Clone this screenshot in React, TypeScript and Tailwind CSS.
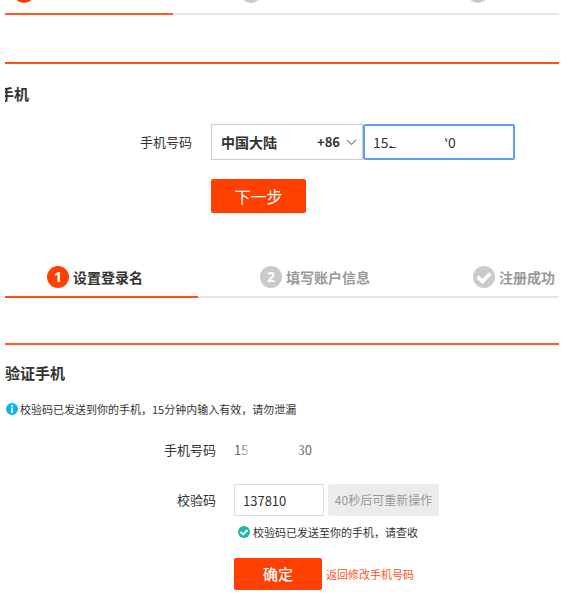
import { useState } from 'react';

function CheckMark({ className }: { className: string }) {
  return (
    <svg viewBox="0 0 22 22" className={className} aria-hidden="true">
      <circle cx="11" cy="11" r="11" fill="currentColor" />
      <path d="M4.6 10.8l4.8 4.6 8-8" fill="none" stroke="#fff" strokeWidth="3.6" />
    </svg>
  );
}

function InfoIcon() {
  return (
    <svg viewBox="0 0 12 12" className="size-3 text-[#0ab4f5]" aria-hidden="true">
      <circle cx="6" cy="6" r="6" fill="currentColor" />
      <path d="M5 2.2h2v1.6H5zM5 4.8h2v5H5z" fill="#fff" />
    </svg>
  );
}

function Badge({ active, children }: { active?: boolean; children?: string }) {
  return (
    <span
      className={`flex size-[22px] shrink-0 items-center justify-center rounded-full font-['Open_Sans',sans-serif] text-sm font-bold text-white ${
        active ? 'bg-[#ff4000]' : 'bg-[#cacaca]'
      }`}
    >
      {children}
    </span>
  );
}

function PhoneForm() {
  const [phone, setPhone] = useState(`152${'\u00a0'.repeat(14)}80`);

  return (
    <section>
      {/* Only the lower edge of the step badges is in view */}
      <div className="flex h-[3px] items-end overflow-hidden pl-2">
        <div className="w-[227px]">
          <Badge active />
        </div>
        <div className="w-[227px]">
          <Badge />
        </div>
        <Badge />
      </div>
      <div className="mt-2.5 h-0.5 bg-[#e6e6e6]">
        <div className="h-full w-[168px] bg-[#ff5a24]" />
      </div>

      <div className="mt-[47px] border-t-2 border-[#ff5010]" />
      <h2 className="mt-5 overflow-hidden text-[15px] leading-5 font-bold">
        <span className="-ml-1.5">手机</span>
      </h2>

      <form className="mt-5" onSubmit={(e) => e.preventDefault()}>
        <div className="flex items-center gap-[19px]">
          <label htmlFor="phone" className="w-[187px] text-right text-[13px]">
            手机号码
          </label>
          <div className="flex h-9">
            <div className="relative w-[152px]">
              <select
                aria-label="国家/地区"
                className="size-full appearance-none border border-[#ccc] bg-white pl-[9px] text-sm font-bold outline-none"
              >
                <option>中国大陆</option>
              </select>
              <div className="pointer-events-none absolute inset-y-0 right-1.5 flex items-center gap-1.5">
                <span className="text-[13px] font-bold">+86</span>
                <svg viewBox="0 0 11 7" className="h-[7px] w-[11px]" aria-hidden="true">
                  <path d="M1 1l4.5 4.5L10 1" fill="none" stroke="#888" strokeWidth="1.2" />
                </svg>
              </div>
            </div>
            <div className="relative w-[152px]">
              <input
                id="phone"
                type="tel"
                value={phone}
                onChange={(e) => setPhone(e.target.value)}
                className="size-full rounded-xs border-2 border-[#5c9ff5] bg-white pl-2 text-sm outline-none"
              />
              <span className="pointer-events-none absolute top-2 left-[26px] h-3.5 w-4 bg-white" />
              <span className="pointer-events-none absolute top-2 left-[70px] h-5 w-3 bg-white" />
              <span className="pointer-events-none absolute top-[18px] left-[70px] h-2.5 w-[15px] bg-white" />
            </div>
          </div>
        </div>
        <button
          type="submit"
          className="mt-[19px] ml-[206px] h-[34px] w-[95px] rounded-xs bg-[#ff4000] text-base text-white"
        >
          下一步
        </button>
      </form>
    </section>
  );
}

function VerifyForm() {
  const [code, setCode] = useState('137810');

  return (
    <section className="mt-[53px]">
      <ol className="flex h-[22px] items-center pl-[42px] text-sm font-bold">
        <li className="flex w-[213px] items-center gap-1">
          <Badge active>1</Badge>
          设置登录名
        </li>
        <li className="flex w-[213px] items-center gap-1 text-[#999]">
          <Badge>2</Badge>
          填写账户信息
        </li>
        <li className="flex items-center gap-1 whitespace-nowrap text-[#999]">
          <CheckMark className="size-[22px] text-[#cacaca]" />
          注册成功
        </li>
      </ol>
      <div className="mt-2 h-0.5 bg-[#e6e6e6]">
        <div className="h-full w-[193px] bg-[#ff4f18]" />
      </div>

      <div className="mt-[45px] border-t-2 border-[#ff5a24]" />
      <h2 className="mt-[18px] text-[15px] leading-5 font-bold">验证手机</h2>
      <p className="mt-[18px] flex items-center gap-0.5 pl-px text-[11px] leading-4">
        <InfoIcon />
        校验码已发送到你的手机，15分钟内输入有效，请勿泄漏
      </p>

      <form className="mt-[23px] text-[13px]" onSubmit={(e) => e.preventDefault()}>
        <div className="flex items-center gap-[18px] leading-5">
          <span className="w-[211px] text-right">手机号码</span>
          <span className="relative flex w-[78px] justify-between text-[#666]">
            <span>15</span>
            <span>30</span>
            <span className="absolute inset-y-0 left-1.5 w-3 bg-linear-to-r from-white/0 to-white" />
            <span className="absolute inset-y-0 right-2 w-2 bg-linear-to-l from-white/0 to-white" />
          </span>
        </div>

        <div className="mt-6 flex items-center">
          <label htmlFor="code" className="mr-[18px] w-[211px] text-right">
            校验码
          </label>
          <input
            id="code"
            type="text"
            value={code}
            onChange={(e) => setCode(e.target.value)}
            className="h-8 w-[90px] border border-[#ddd] bg-white pl-2 outline-none"
          />
          <button
            type="button"
            disabled
            className="ml-1 h-8 w-[111px] rounded-xs bg-[#ececec] text-xs text-[#999]"
          >
            40秒后可重新操作
          </button>
        </div>

        <p className="mt-2 ml-[233px] flex items-center gap-[3px] text-[11px] leading-4">
          <CheckMark className="size-3 text-[#16baa9]" />
          校验码已发送至你的手机，请查收
        </p>

        <div className="mt-[18px] ml-[229px] flex items-center gap-1">
          <button
            type="submit"
            className="h-8 w-[88px] rounded-xs bg-[#ff4000] text-[15px] font-medium text-white"
          >
            确定
          </button>
          <a href="#phone" className="text-[11px] leading-4 text-[#ff5522]">
            返回修改手机号码
          </a>
        </div>
      </form>
    </section>
  );
}

export default function App() {
  return (
    <main className="min-h-screen bg-white pr-3.5 pl-[5px] font-['Noto_Sans_CJK_SC',sans-serif] text-[#333]">
      <PhoneForm />
      <VerifyForm />
    </main>
  );
}
